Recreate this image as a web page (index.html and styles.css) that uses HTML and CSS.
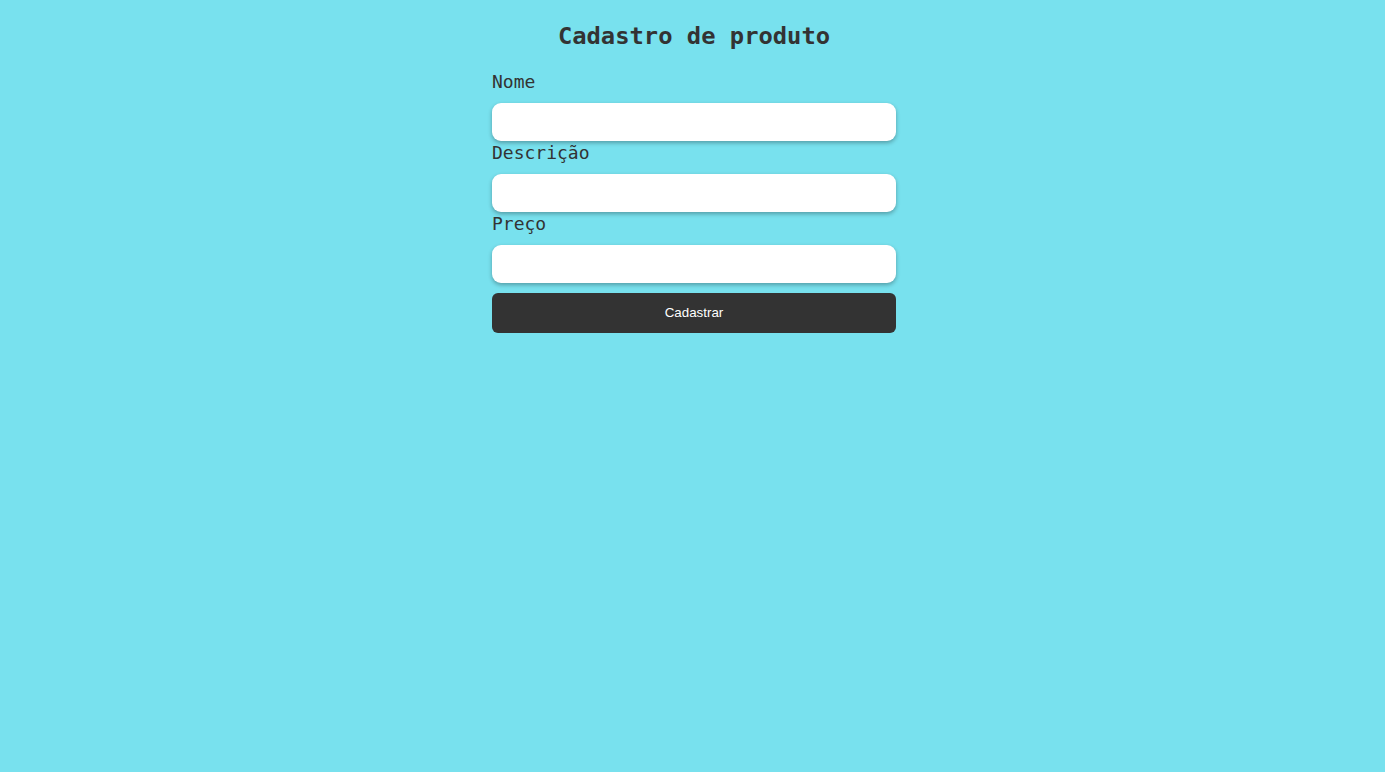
FILE: index.html
```html
<!DOCTYPE html>
<html lang="pt-BR">
<head>
<meta charset="utf-8">
<title>Cadastro de produto</title>
<link rel="stylesheet" href="styles.css">
</head>
<body>
<main class="page">
  <h1 class="title">Cadastro de produto</h1>
  <form class="form">
    <label class="label" for="nome">Nome</label>
    <input class="input" id="nome" type="text">
    <label class="label" for="descricao">Descrição</label>
    <input class="input" id="descricao" type="text">
    <label class="label" for="preco">Preço</label>
    <input class="input" id="preco" type="text">
    <button class="button" type="button">Cadastrar</button>
  </form>
</main>
</body>
</html>
```
FILE: styles.css
```css
html, body {
  margin: 0;
  height: 100%;
}
body {
  background: #78e1ee;
  color: #333;
  font-family: "DejaVu Sans Mono", "Liberation Mono", monospace;
  padding-left: 3px;
  box-sizing: border-box;
}
.page {
  display: flex;
  flex-direction: column;
  align-items: center;
}
.title {
  margin: 0;
  padding-top: 22px;
  font-size: 23.8px;
  line-height: 28px;
  font-weight: bold;
  color: #333;
}
.form {
  width: 404px;
  display: flex;
  flex-direction: column;
  margin-top: 20px;
}
.label {
  font-size: 18px;
  line-height: 22px;
  padding-top: 1px;
  margin-bottom: 10px;
  color: #333;
}
.input {
  height: 38px;
  box-sizing: border-box;
  border: none;
  border-radius: 9px;
  background: #fff;
  box-shadow: 0 2px 4px rgba(0,0,0,0.3);
  padding: 0 10px;
  outline: none;
}
.button {
  margin-top: 10px;
  height: 40px;
  border: none;
  border-radius: 6px;
  background: #333;
  color: #fff;
  font-family: "Liberation Sans", Arial, sans-serif;
  font-size: 13.33px;
  padding: 0 0 2px;
}
```
